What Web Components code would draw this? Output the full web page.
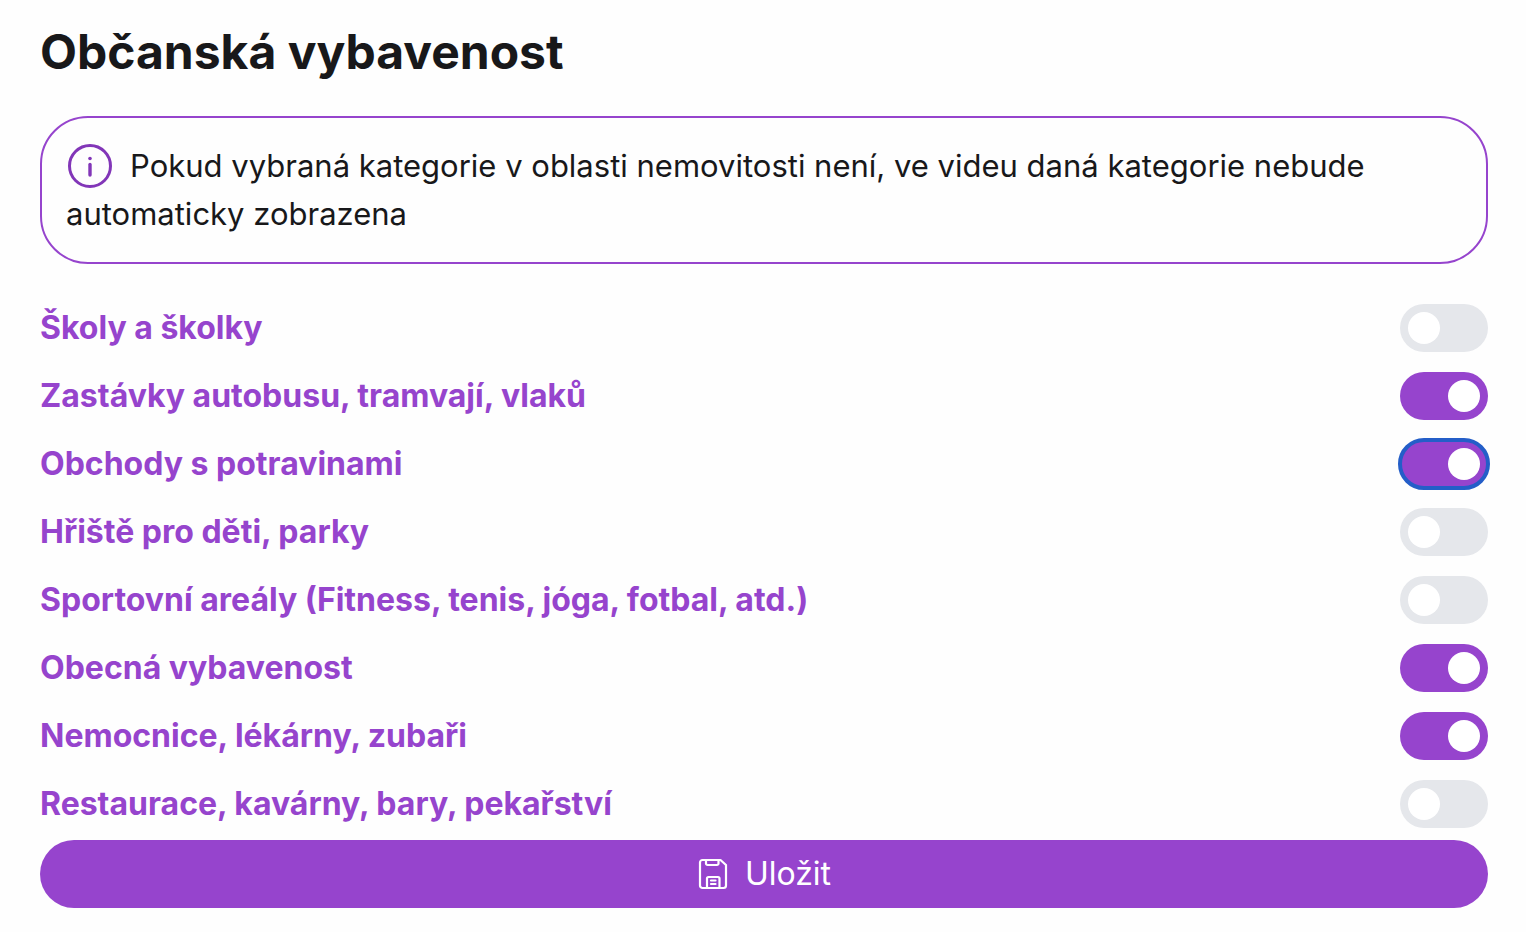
<!DOCTYPE html>
<html lang="cs">
<head>
<meta charset="utf-8">
<meta name="viewport" content="width=device-width, initial-scale=1">
<title>Občanská vybavenost</title>
<style>
  :root {
    --accent: #9644cd;
    --accent-dark: #8236b8;
    --track: #e5e7eb;
    --ring: #245ec8;
    --ink: #18181a;
    --page: #fefefe;
  }
  body {
    margin: 0;
    background: var(--page);
    color: var(--ink);
    font-family: Inter, "Liberation Sans", Arial, sans-serif;
    font-size: 32px;
    line-height: 48px;
  }
</style>
</head>
<body>
<amenity-form>
  <span slot="title">Občanská vybavenost</span>
  <info-note slot="note">Pokud vybraná kategorie v oblasti nemovitosti není, ve videu daná kategorie nebude automaticky zobrazena</info-note>
  <toggle-row>Školy a školky</toggle-row>
  <toggle-row checked>Zastávky autobusu, tramvají, vlaků</toggle-row>
  <toggle-row checked current>Obchody s potravinami</toggle-row>
  <toggle-row>Hřiště pro děti, parky</toggle-row>
  <toggle-row>Sportovní areály (Fitness, tenis, jóga, fotbal, atd.)</toggle-row>
  <toggle-row checked>Obecná vybavenost</toggle-row>
  <toggle-row checked>Nemocnice, lékárny, zubaři</toggle-row>
  <toggle-row>Restaurace, kavárny, bary, pekařství</toggle-row>
  <save-button slot="action">Uložit</save-button>
</amenity-form>

<script>
  class BaseElement extends HTMLElement {
    constructor() {
      super();
      this.attachShadow({ mode: "open" }).innerHTML = this.constructor.markup;
    }
  }

  class AmenityForm extends BaseElement {
    static markup = `
      <style>
        :host { display: block; padding: 24px 38px 24px 40px; }
        h1 { margin: 0 0 36px; font-size: 48px; line-height: 56px; font-weight: 700; }
        .rows { display: flex; flex-direction: column; gap: 20px; margin: 40px 0 12px; }
      </style>
      <main>
        <h1><slot name="title"></slot></h1>
        <slot name="note"></slot>
        <div class="rows"><slot></slot></div>
        <slot name="action"></slot>
      </main>`;
  }

  class InfoNote extends BaseElement {
    static markup = `
      <style>
        :host { display: block; border: 2px solid var(--accent); border-radius: 48px; padding: 24px; font-size: 31px; }
        p { margin: 0; }
        svg { width: 48px; height: 48px; margin-right: 16px; vertical-align: top; color: var(--accent-dark); }
      </style>
      <p><svg viewBox="0 0 48 48" fill="none" stroke="currentColor" stroke-linecap="round" aria-hidden="true"><circle cx="24" cy="24" r="20.5" stroke-width="3"/><path d="M24 22.5V33" stroke-width="3.4"/><circle cx="24" cy="16.5" r="1.8" fill="currentColor" stroke="none"/></svg><slot></slot></p>`;
  }

  class ToggleRow extends BaseElement {
    static markup = `
      <style>
        :host { display: block; color: var(--accent); font-weight: 700; }
        label { display: flex; align-items: center; justify-content: space-between; gap: 24px; cursor: pointer; }
        input {
          appearance: none; flex: none; display: flex; align-items: center; box-sizing: border-box;
          width: 88px; height: 48px; margin: 0; padding: 8px; border-radius: 24px;
          background: var(--track); cursor: pointer;
        }
        input::before { content: ""; width: 32px; height: 32px; border-radius: 50%; background: #fff; }
        input:checked { background: var(--accent); justify-content: flex-end; }
        input:focus-visible, :host([current]) input { outline: 4px solid var(--ring); outline-offset: -2px; }
      </style>
      <label><span><slot></slot></span><input type="checkbox" role="switch"></label>`;
    connectedCallback() {
      this.shadowRoot.querySelector("input").checked = this.hasAttribute("checked");
    }
  }

  class SaveButton extends BaseElement {
    static markup = `
      <style>
        :host { display: block; }
        button {
          display: flex; align-items: center; justify-content: center; gap: 16px;
          width: 100%; padding: 10px 24px; border: 0; border-radius: 34px;
          background: var(--accent); color: #fff; font: inherit; cursor: pointer;
        }
        svg { width: 32px; height: 32px; }
      </style>
      <button type="button">
        <svg viewBox="0 0 32 32" fill="none" stroke="currentColor" stroke-width="2.2" stroke-linejoin="round" stroke-linecap="round" aria-hidden="true"><path d="M5.5 2H23.5L29 7V27.5a2.5 2.5 0 0 1-2.5 2.5H5.5a2.5 2.5 0 0 1-2.5-2.5V4.5A2.5 2.5 0 0 1 5.5 2Z"/><path d="M9 2V5.500a1.500 1.500 0 0 0 1.500 1.500H20a1.500 1.500 0 0 0 1.500-1.500V2M10 30V20.500a1.500 1.500 0 0 1 1.500-1.500H21a1.500 1.500 0 0 1 1.500 1.500V30M14 22.500H18.500M14 26H18.500"/></svg>
        <slot></slot>
      </button>`;
  }

  customElements.define("amenity-form", AmenityForm);
  customElements.define("info-note", InfoNote);
  customElements.define("toggle-row", ToggleRow);
  customElements.define("save-button", SaveButton);
</script>
</body>
</html>
